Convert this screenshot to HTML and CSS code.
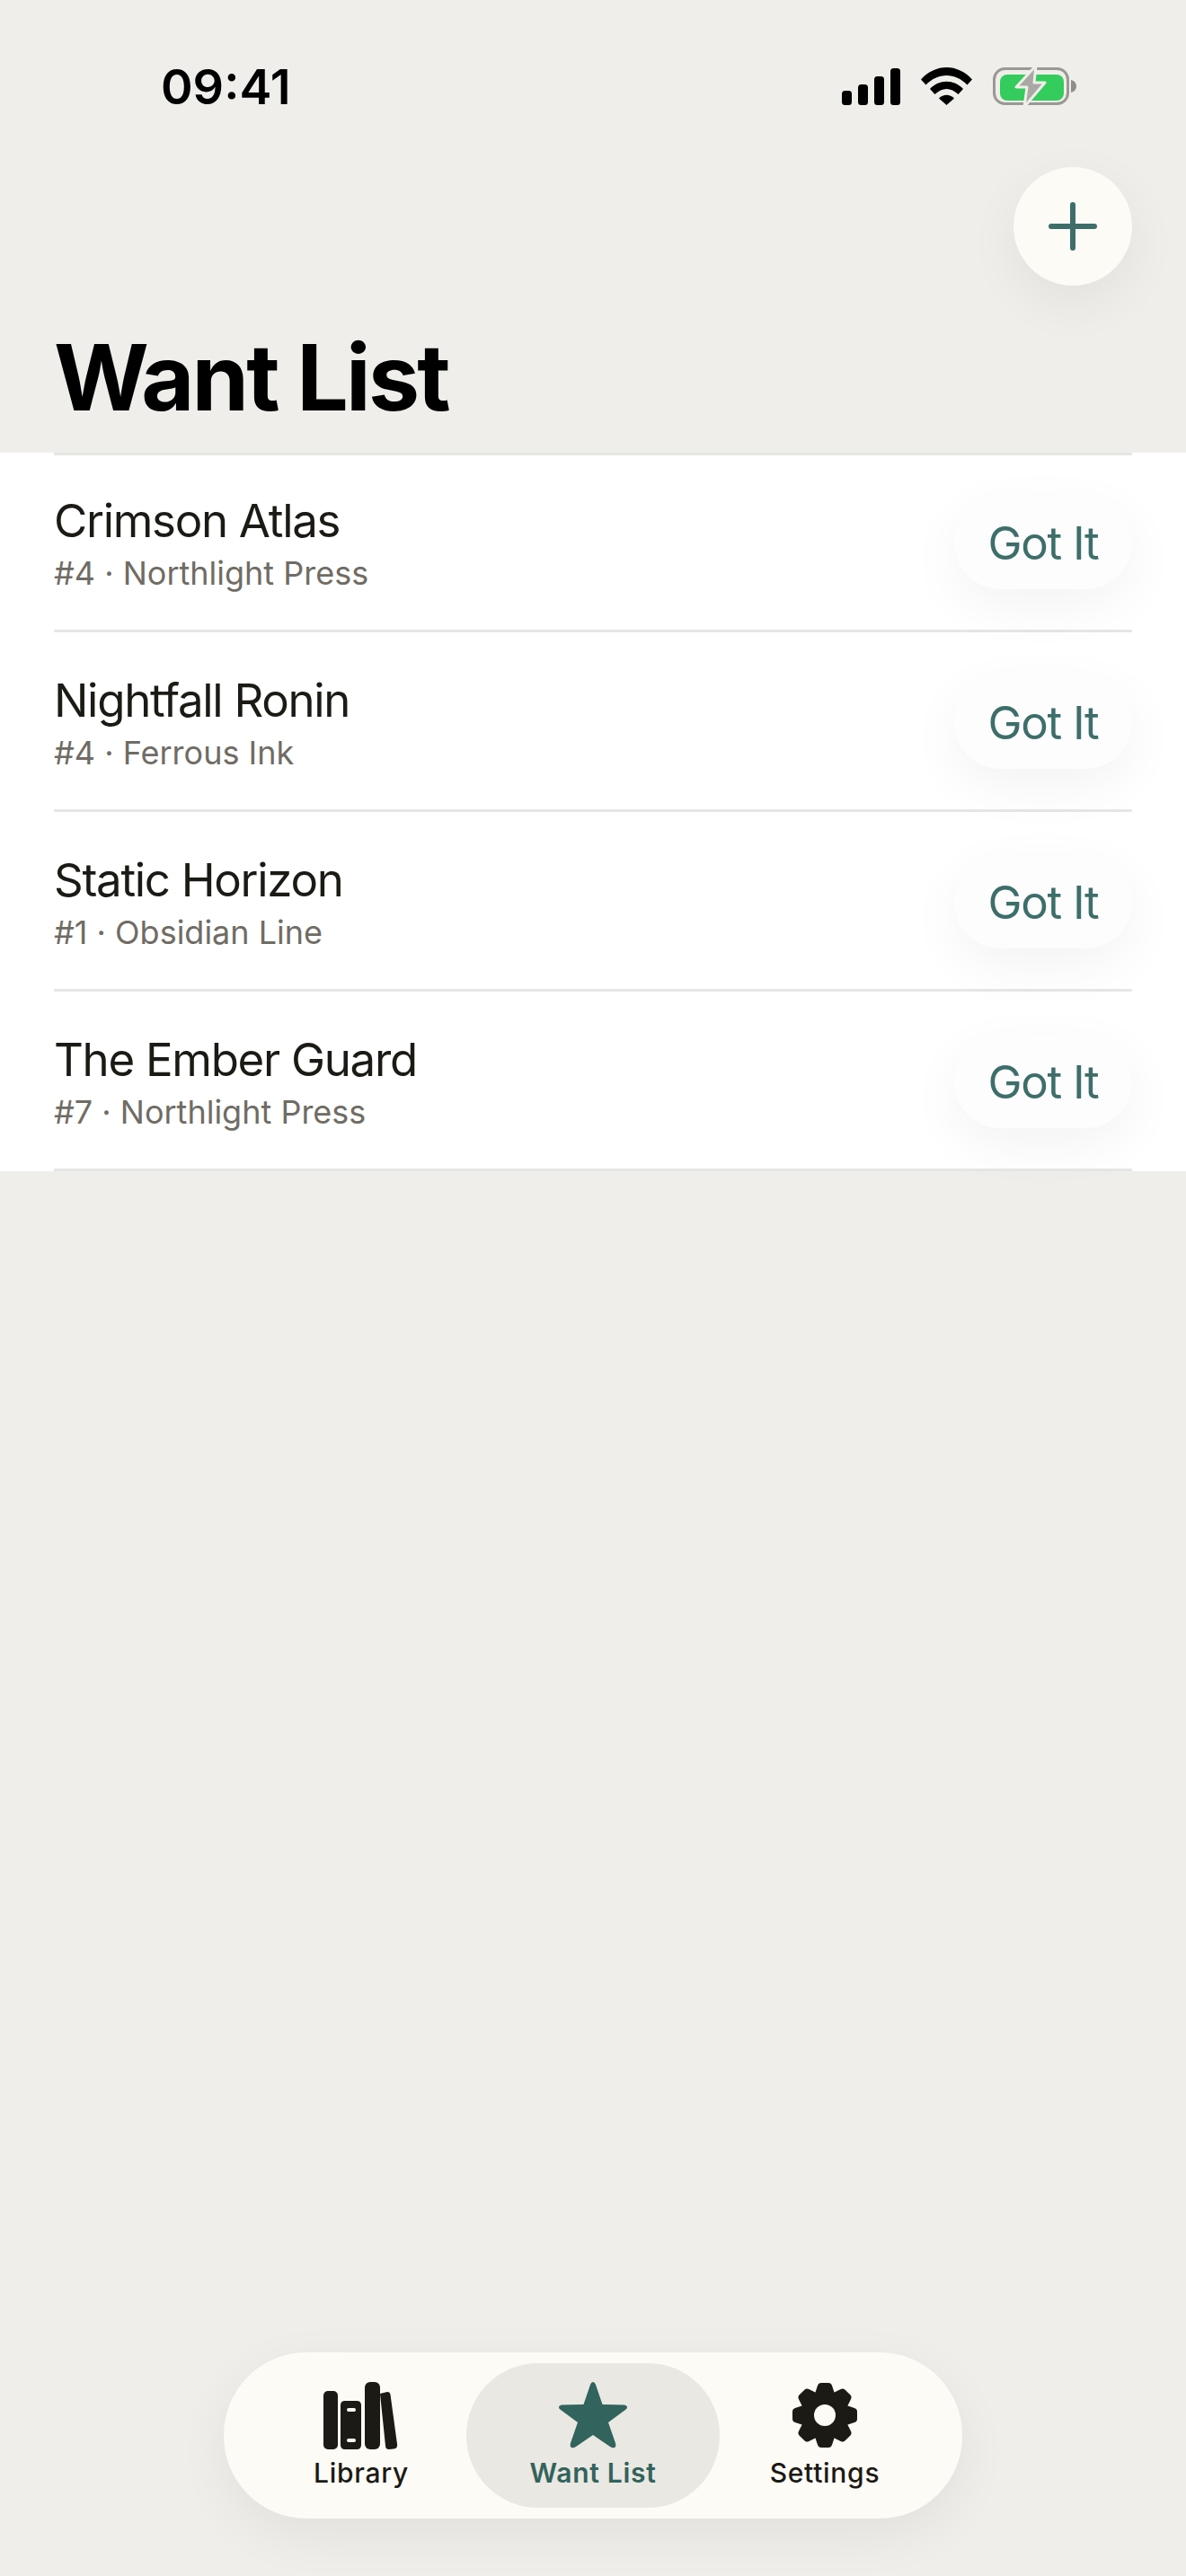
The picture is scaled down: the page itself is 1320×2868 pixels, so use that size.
FILE: index.html
```html
<!DOCTYPE html>
<html>
	<head>
		<meta charset="UTF-8">
		<title>Want List</title>
		<link rel="stylesheet" href="styles.css">
	</head>
	<body>
		<div class="screen">
			<div class="status">
				<span class="time">09:41</span>
				<div class="status_icons">
					<svg class="signal" width="65" height="41" viewBox="0 0 65 41">
						<rect x="0" y="25" width="11" height="16" rx="3.5"/>
						<rect x="18" y="18" width="11" height="23" rx="3.5"/>
						<rect x="36" y="9" width="11" height="32" rx="3.5"/>
						<rect x="54" y="0" width="11" height="41" rx="3.5"/>
					</svg>
					<svg class="wifi" width="57" height="42" viewBox="0 0 57 42">
						<path d="M0 13.5 C16 -4.5 41 -4.5 57 13.5 L51.5 19.5 C38 5.5 19 5.5 5.5 19.5 Z"/>
						<path d="M10 24 C20 13 37 13 47 24 L41.5 30 C33 22 24 22 15.5 30 Z"/>
						<path d="M20 34.5 C25 29.5 32 29.5 37 34.5 L28.5 42 Z"/>
					</svg>
					<svg class="battery" width="94" height="46" viewBox="0 0 94 46">
						<rect x="1.5" y="3.5" width="82" height="39" rx="12" fill="none" stroke="#999894" stroke-width="3"/>
						<rect x="8" y="10" width="71" height="29" rx="8" fill="#34cc5c"/>
						<path d="M87 16 C91 17 93 20 93 23 C93 26 91 29 87 30 Z" fill="#8e8d89"/>
						<path d="M48 0 L26 24 L38 24 L35 46 L58 19 L46 19 Z" fill="#a9a8a4" stroke="#efeeea" stroke-width="3" stroke-linejoin="round"/>
					</svg>
				</div>
			</div>
			<div class="add_row">
				<button class="add_btn">
					<svg width="54" height="54" viewBox="0 0 54 54">
						<path d="M27 3 V51 M3 27 H51" stroke="#3d6e6a" stroke-width="6" stroke-linecap="round"/>
					</svg>
				</button>
			</div>
			<h1 class="title">Want List</h1>
			<ul class="list">
				<li class="row">
					<div class="row_text">
						<p class="row_name">Crimson Atlas</p>
						<p class="row_sub">#4 · Northlight Press</p>
					</div>
					<button class="got">Got It</button>
				</li>
				<li class="row">
					<div class="row_text">
						<p class="row_name">Nightfall Ronin</p>
						<p class="row_sub">#4 · Ferrous Ink</p>
					</div>
					<button class="got">Got It</button>
				</li>
				<li class="row">
					<div class="row_text">
						<p class="row_name">Static Horizon</p>
						<p class="row_sub">#1 · Obsidian Line</p>
					</div>
					<button class="got">Got It</button>
				</li>
				<li class="row">
					<div class="row_text">
						<p class="row_name">The Ember Guard</p>
						<p class="row_sub">#7 · Northlight Press</p>
					</div>
					<button class="got">Got It</button>
				</li>
			</ul>
			<div class="tabs">
				<div class="tab">
					<svg width="84" height="76" viewBox="0 0 84 76" fill="#1c1a15">
						<rect x="0" y="10" width="16" height="65" rx="5"/>
						<path fill-rule="evenodd" d="M24 21 H37 Q42 21 42 26 V70 Q42 75 37 75 H24 Q19 75 19 70 V26 Q19 21 24 21 Z M28 29 Q26 29 26 31 Q26 33 28 33 H34 Q36 33 36 31 Q36 29 34 29 Z M28 63 Q26 63 26 65 Q26 67 28 67 H34 Q36 67 36 65 Q36 63 34 63 Z"/>
						<rect x="46" y="0" width="17" height="75" rx="6"/>
						<path d="M63 13 L71 11 Q74 11 74.500 14 L82 69 Q83 74 78 74.500 L73 75 Q69 75 69 71 Z"/>
					</svg>
					<span class="tab_label">Library</span>
				</div>
				<div class="tab tab_on">
					<svg width="78" height="76" viewBox="0 0 78 76" fill="#32635d">
						<path d="M39 0 Q41 0 42 3 L49.500 25 L73 25.500 Q77 26 77 28 Q77 30 75 31 L56 45 L64 68 Q65 72 63 73 Q61 74 58 72 L39 59 L20 72 Q17 74 15 73 Q13 72 14 68 L22 45 L3 31 Q1 30 1 28 Q1 26 5 25.500 L28.500 25 L36 3 Q37 0 39 0 Z"/>
					</svg>
					<span class="tab_label">Want List</span>
				</div>
				<div class="tab">
					<svg width="74" height="76" viewBox="-37 -37 74 76" fill="#1c1a15">
						<defs>
							<path id="tooth" d="M-11 -24 L-8 -33 Q-7 -36 -4 -36 H4 Q7 -36 8 -33 L11 -24 Z"/>
						</defs>
						<use href="#tooth"/>
						<use href="#tooth" transform="rotate(45)"/>
						<use href="#tooth" transform="rotate(90)"/>
						<use href="#tooth" transform="rotate(135)"/>
						<use href="#tooth" transform="rotate(180)"/>
						<use href="#tooth" transform="rotate(225)"/>
						<use href="#tooth" transform="rotate(270)"/>
						<use href="#tooth" transform="rotate(315)"/>
						<circle r="27"/>
						<circle r="12" fill="#fdfbf6"/>
					</svg>
					<span class="tab_label">Settings</span>
				</div>
			</div>
		</div>
	</body>
</html>
```

FILE: styles.css
```css
*{
	padding: 0;
	margin: 0;
	box-sizing: border-box;
}
html,body{
	height: 100%;
}
body{
	background: #efeeea;
	font-family: Inter, "Liberation Sans", sans-serif;
	overflow: hidden;
}
.screen{
	height: 2868px;
	display: flex;
	flex-direction: column;
}
.status{
	height: 186px;
	padding: 69px 121px 0 179px;
	display: flex;
	justify-content: space-between;
	align-items: flex-start;
}
.time{
	font-size: 54px;
	line-height: 56px;
	font-weight: 600;
	color: #000;
}
.status_icons{
	display: flex;
	align-items: flex-start;
	padding-top: 7px;
}
.status_icons svg{
	display: block;
}
.wifi{
	margin-left: 23px;
	margin-top: -1px;
}
.battery{
	margin-left: 23px;
	margin-top: -3px;
}
.add_row{
	padding-right: 60px;
	display: flex;
	justify-content: flex-end;
}
.add_btn{
	width: 132px;
	height: 132px;
	border: none;
	border-radius: 50%;
	background: #fdfbf6;
	box-shadow: 0 18px 60px rgba(0, 0, 0, 0.06);
	display: flex;
	align-items: center;
	justify-content: center;
}
.title{
	margin: 40px 0 0 60px;
	height: 146px;
	font-size: 102px;
	line-height: 124px;
	font-weight: 700;
	letter-spacing: -2.8px;
	color: #000;
}
.list{
	list-style: none;
	background: #fff;
	padding: 0 60px;
}
.row{
	height: 200px;
	padding-top: 4px;
	border-bottom: 3px solid #e6e6e4;
	display: flex;
	align-items: center;
	justify-content: space-between;
}
.row:first-child{
	box-shadow: inset 0 3px 0 #e6e6e4;
}
.row_name{
	font-size: 51px;
	line-height: 60px;
	letter-spacing: -1.3px;
	color: #1c1a15;
}
.row_sub{
	margin-top: 6px;
	font-size: 36px;
	line-height: 44px;
	color: #6f6c64;
}
.got{
	width: 198px;
	height: 103px;
	border: none;
	border-radius: 52px;
	background: #fdfdfd;
	box-shadow: 0 18px 60px rgba(0, 0, 0, 0.05);
	font-family: inherit;
	font-size: 51px;
	letter-spacing: -1.3px;
	color: #3d6e6a;
}
.tabs{
	margin: auto auto 64px;
	width: 822px;
	height: 185px;
	padding: 12px;
	border-radius: 92px;
	background: #fdfbf6;
	box-shadow: 0 18px 60px rgba(0, 0, 0, 0.06);
	display: flex;
}
.tab{
	width: 282px;
	height: 161px;
	flex: none;
	border-radius: 80px;
	padding-top: 21px;
	display: flex;
	flex-direction: column;
	align-items: center;
	color: #1c1a15;
}
.tab + .tab{
	margin-left: -24px;
}
.tab_on{
	background: #eae8e2;
	color: #32635d;
}
.tab svg{
	display: block;
}
.tab_label{
	margin-top: 6px;
	font-size: 30px;
	line-height: 38px;
	font-weight: 500;
	letter-spacing: 0.7px;
}
.tab_on .tab_label{
	font-weight: 600;
}
```
